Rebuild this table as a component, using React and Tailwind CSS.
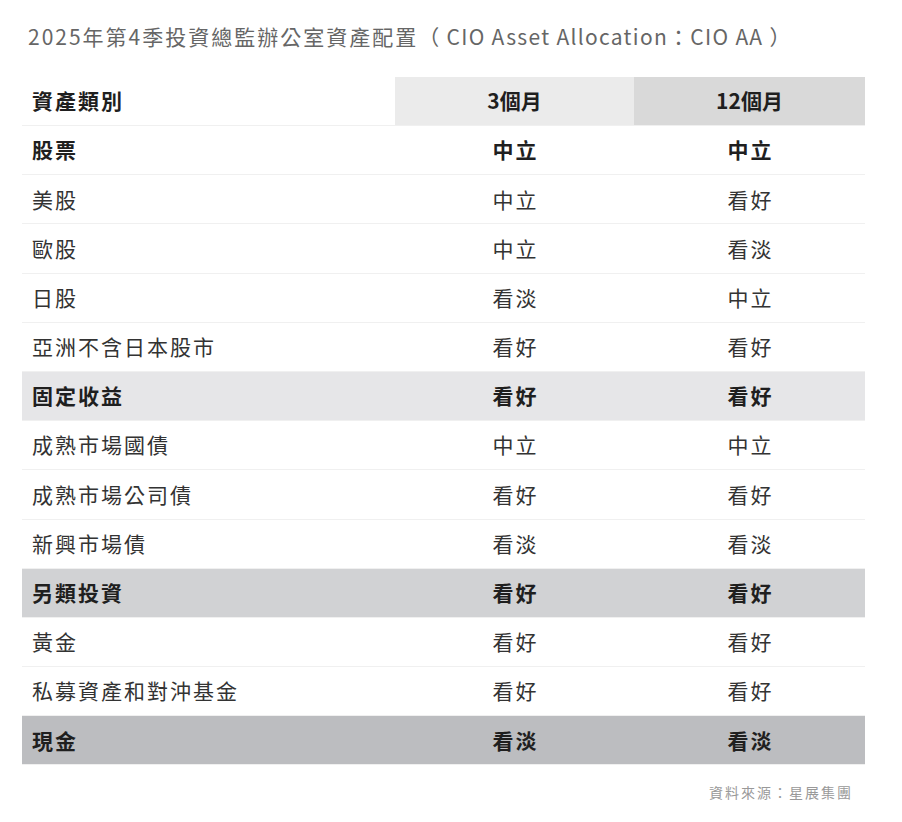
import * as React from "react";

const FONT = "font-['Noto_Sans_CJK_TC','Noto_Sans',sans-serif]";

const rows = [
  { name: "股票", m3: "中立", m12: "中立", bold: true, bg: "bg-white" },
  { name: "美股", m3: "中立", m12: "看好" },
  { name: "歐股", m3: "中立", m12: "看淡" },
  { name: "日股", m3: "看淡", m12: "中立" },
  { name: "亞洲不含日本股市", m3: "看好", m12: "看好" },
  { name: "固定收益", m3: "看好", m12: "看好", bold: true, bg: "bg-[#e6e6e8]" },
  { name: "成熟市場國債", m3: "中立", m12: "中立" },
  { name: "成熟市場公司債", m3: "看好", m12: "看好" },
  { name: "新興市場債", m3: "看淡", m12: "看淡" },
  { name: "另類投資", m3: "看好", m12: "看好", bold: true, bg: "bg-[#d1d2d4]" },
  { name: "黃金", m3: "看好", m12: "看好" },
  { name: "私募資產和對沖基金", m3: "看好", m12: "看好" },
  { name: "現金", m3: "看淡", m12: "看淡", bold: true, bg: "bg-[#bcbdc0]" },
];

function Row({ row }) {
  const weight = row.bold ? "font-bold text-[#1f1f1f]" : "font-normal text-[#333]";
  return (
    <div className={`flex h-[49.2px] items-center border-b border-[#f0f0f0] ${row.bg || "bg-white"} ${weight}`}>
      <div className="w-[373px] pl-[10px] tracking-[2px]">{row.name}</div>
      <div className="w-[239px] pl-[2px] text-center tracking-[2px]">{row.m3}</div>
      <div className="flex-1 pl-[2px] text-center tracking-[2px]">{row.m12}</div>
    </div>
  );
}

export default function App() {
  return (
    <div className={`w-[902px] h-[822px] bg-white ${FONT}`}>
      {/* Title */}
      <h1 className="pl-[28px] pt-[20px] text-[21px] leading-[32px] font-normal text-[#666]">
        <span className="tracking-[2px]">2025年第4季投資總監辦公室資產配置</span>
        <span className="tracking-[1.3px]">（ CIO Asset Allocation：CIO AA ）</span>
      </h1>

      {/* Table */}
      <div className="ml-[22px] mt-[25px] w-[843px] text-[21px]">
        <div className="flex h-[49px] items-center border-b border-[#f0f0f0] font-bold text-[#1f1f1f]">
          <div className="w-[373px] pl-[10px] tracking-[2px]">資產類別</div>
          <div className="flex h-full w-[239px] items-center justify-center bg-[#ebebeb]">3個月</div>
          <div className="flex h-full flex-1 items-center justify-center bg-[#d9d9d9]">12個月</div>
        </div>
        {rows.map((row, i) => (
          <Row key={i} row={row} />
        ))}
      </div>

      {/* Source */}
      <p className="mt-[17px] w-[853px] text-right text-[14px] tracking-[2px] text-[#999]">
        資料來源：星展集團
      </p>
    </div>
  );
}
